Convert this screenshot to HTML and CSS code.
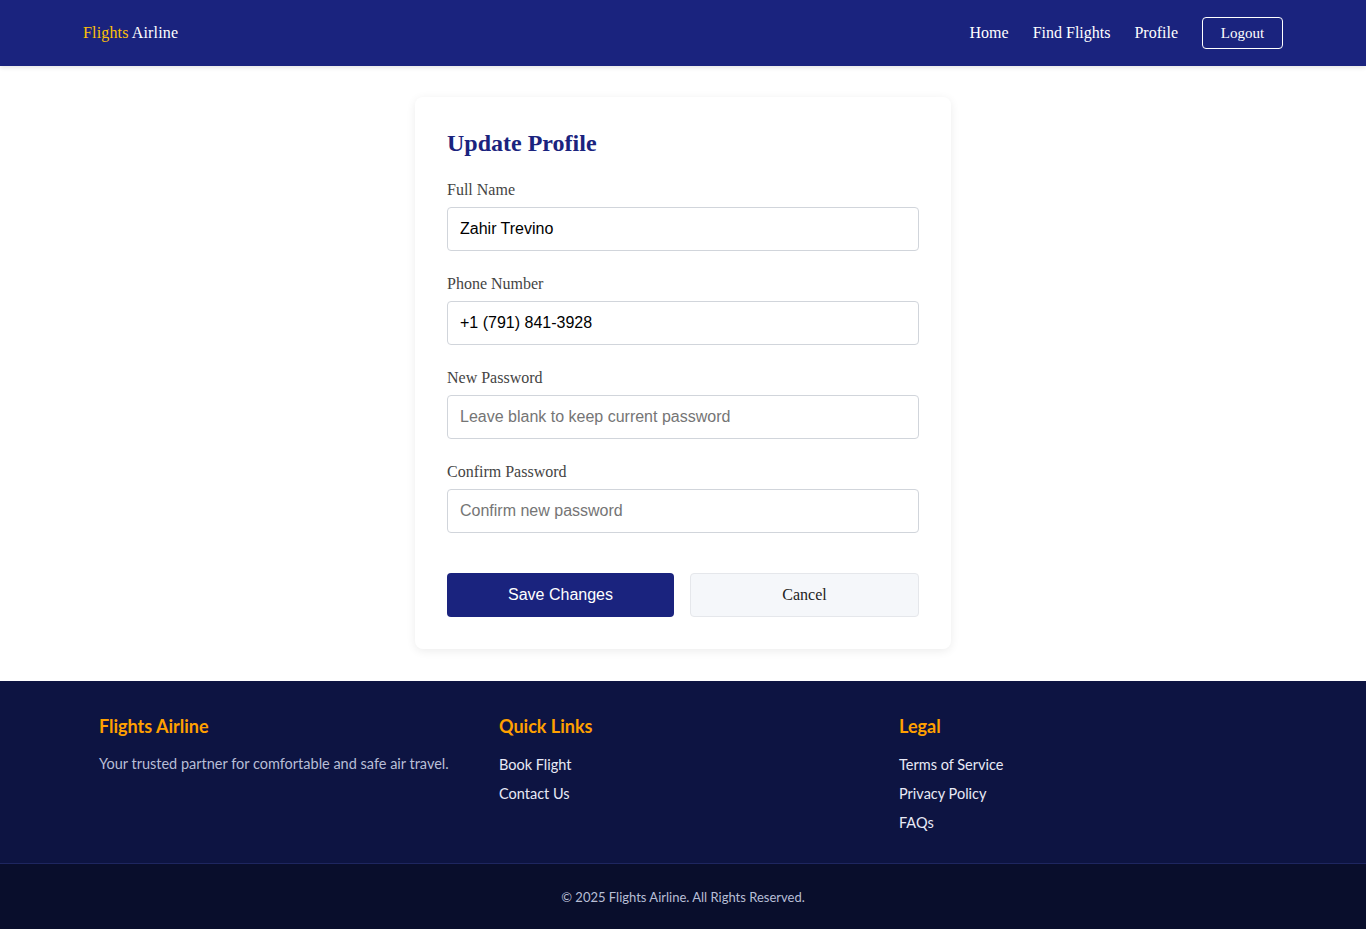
FILE: index.html
```html
<!DOCTYPE html>
<html lang="en">
<head>
<meta charset="utf-8">
<title>Update Profile - Flights Airline</title>
<link rel="stylesheet" href="styles.css">
</head>
<body>
<header class="navbar">
  <div class="nav-inner">
    <a class="brand" href="#"><span class="brand-accent">Flights</span> Airline</a>
    <nav class="nav-links">
      <a href="#">Home</a>
      <a href="#">Find Flights</a>
      <a href="#">Profile</a>
      <a href="#" class="btn-logout">Logout</a>
    </nav>
  </div>
</header>

<main class="main">
  <section class="card">
    <h2 class="card-title">Update Profile</h2>
    <form class="form">
      <div class="form-group">
        <label for="name">Full Name</label>
        <input id="name" type="text" value="Zahir Trevino">
      </div>
      <div class="form-group">
        <label for="phone">Phone Number</label>
        <input id="phone" type="text" value="+1 (791) 841-3928">
      </div>
      <div class="form-group">
        <label for="pw">New Password</label>
        <input id="pw" type="password" placeholder="Leave blank to keep current password">
      </div>
      <div class="form-group">
        <label for="pw2">Confirm Password</label>
        <input id="pw2" type="password" placeholder="Confirm new password">
      </div>
      <div class="actions">
        <button type="button" class="btn-save">Save Changes</button>
        <a href="#" class="btn-cancel">Cancel</a>
      </div>
    </form>
  </section>
</main>

<footer class="footer">
  <div class="footer-inner">
    <div class="footer-col">
      <h3>Flights Airline</h3>
      <p>Your trusted partner for comfortable and safe air travel.</p>
    </div>
    <div class="footer-col">
      <h3>Quick Links</h3>
      <ul>
        <li><a href="#">Book Flight</a></li>
        <li><a href="#">Contact Us</a></li>
      </ul>
    </div>
    <div class="footer-col">
      <h3>Legal</h3>
      <ul>
        <li><a href="#">Terms of Service</a></li>
        <li><a href="#">Privacy Policy</a></li>
        <li><a href="#">FAQs</a></li>
      </ul>
    </div>
  </div>
  <div class="footer-bottom">
    <p>&copy; 2025 Flights Airline. All Rights Reserved.</p>
  </div>
</footer>
</body>
</html>
```

FILE: styles.css
```css
* { box-sizing: border-box; }

body {
  margin: 0;
  font-family: "Liberation Serif", "Times New Roman", serif;
  background: #ffffff;
  color: #333;
}

a { text-decoration: none; color: inherit; }

.navbar {
  background: #1a237e;
  height: 66px;
  box-shadow: 0 2px 4px rgba(0,0,0,0.1);
}

.nav-inner {
  width: 1200px;
  margin: 0 auto;
  height: 100%;
  display: flex;
  align-items: center;
  justify-content: space-between;
}

.brand {
  font-size: 16px;
  letter-spacing: 0.15px;
  color: #ffffff;
}

.brand-accent { color: #ffc107; }

.nav-links {
  display: flex;
  align-items: center;
  gap: 24px;
}

.nav-links a {
  color: #ffffff;
  font-size: 16px;
}

.btn-logout {
  display: inline-flex;
  align-items: center;
  justify-content: center;
  width: 81px;
  height: 32px;
  border: 1px solid #ffffff;
  border-radius: 4px;
  font-size: 15px !important;
}

.main {
  padding: 31px 0 32px;
  display: flex;
  justify-content: center;
}

.card {
  width: 536px;
  background: #fff;
  border-radius: 8px;
  box-shadow: 0 2px 10px rgba(0,0,0,0.08);
  padding: 32px;
}

.card-title {
  margin: 0 0 24px;
  font-size: 24px;
  line-height: 28px;
  color: #1a237e;
  font-weight: bold;
}

.form-group {
  display: flex;
  flex-direction: column;
  margin-bottom: 24px;
}

.form-group label {
  font-size: 16px;
  line-height: 18px;
  color: #444;
  margin-bottom: 8px;
}

.form-group input {
  height: 44px;
  border: 1px solid #d1d5db;
  border-radius: 4px;
  padding: 0 12px;
  font-family: "Liberation Sans", Arial, sans-serif;
  font-size: 16px;
  color: #000;
  background: #fff;
}

.form-group input::placeholder { color: #757575; }

.actions {
  display: grid;
  grid-template-columns: 227px 229px;
  gap: 16px;
  margin-top: 40px;
}

.btn-save {
  height: 44px;
  border: none;
  border-radius: 4px;
  background: #1a237e;
  color: #fff;
  font-family: "Liberation Sans", Arial, sans-serif;
  font-size: 16px;
}

.btn-cancel {
  height: 44px;
  display: flex;
  align-items: center;
  justify-content: center;
  background: #f5f7fa;
  border: 1px solid #e5e7eb;
  border-radius: 4px;
  color: #222;
  font-size: 16px;
}

.footer {
  background: #0d1442;
  font-family: "Lato", "Open Sans", sans-serif;
}

.footer-inner {
  width: 1200px;
  margin: 0 auto;
  padding: 34px 16px 22px;
  display: grid;
  grid-template-columns: repeat(3, 1fr);
  gap: 32px;
}

.footer-col h3 {
  margin: 0 0 17px;
  font-size: 18px;
  line-height: 22px;
  font-weight: 700;
  color: #ffa000;
}

.footer-col p {
  margin: 0;
  font-size: 14.5px;
  line-height: 20px;
  color: #b8bed6;
}

.footer-col ul {
  list-style: none;
  margin: 0;
  padding: 0;
}

.footer-col li {
  line-height: 20px;
  height: 20px;
  margin-bottom: 9px;
}

.footer-col li a {
  font-size: 14.5px;
  line-height: 20px;
  color: #e8eaf6;
}

.footer-bottom {
  background: #090e2c;
  border-top: 1px solid #1e2660;
  height: 66px;
  display: flex;
  align-items: center;
  justify-content: center;
}

.footer-bottom p {
  margin: 0;
  font-size: 13px;
  color: #b8bed6;
}
```
